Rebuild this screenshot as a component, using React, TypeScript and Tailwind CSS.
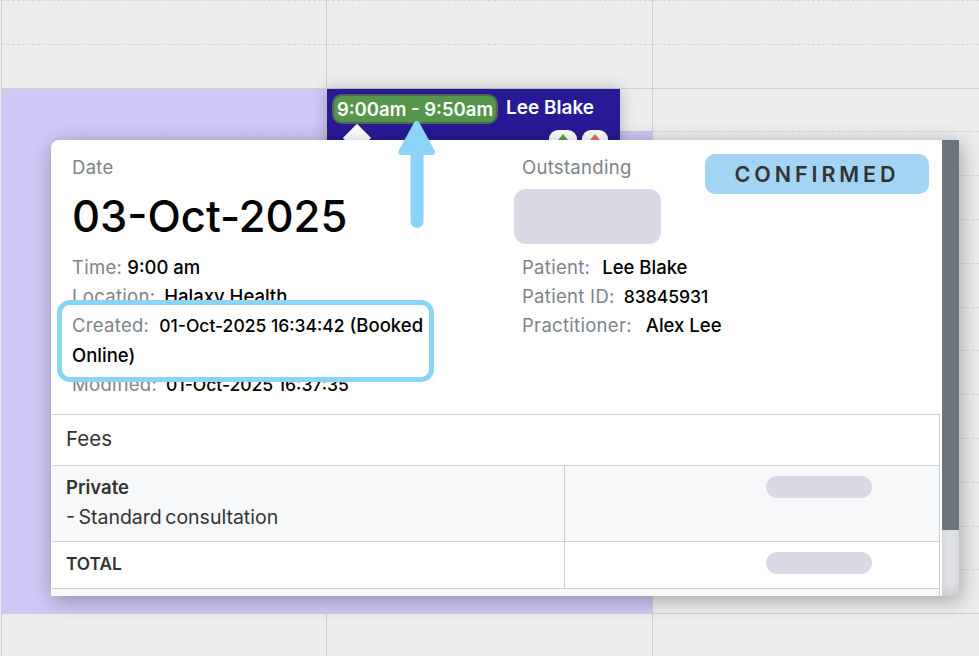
const FONT = "font-['Inter','Liberation_Sans',sans-serif]";

function Slot({ purple, solid, grow }: { purple?: boolean; solid?: boolean; grow?: boolean }) {
  const line = solid ? 'border-solid border-[#cfd0d6]' : purple ? 'border-dashed border-[#cbc3ec]' : 'border-dashed border-[#d6d6de]';
  return (
    <div className={`${grow ? 'flex-1' : 'h-[43.8px] shrink-0'} border-t ${line} ${purple ? 'bg-[#d1c7f6]' : 'bg-[#ededed]'}`} />
  );
}

// col 1 goes purple from the 3rd slot, col 2 from the 4th, col 3 stays grey
function Column({ purpleFrom, width }: { purpleFrom: number; width: string }) {
  const slots = Array.from({ length: 14 }, (_, i) => i);
  return (
    <div className={`${width} flex flex-col border-l border-[#cfd0d6]`}>
      {slots.map(i => (
        <Slot key={i} solid={i === 2} purple={i >= purpleFrom} />
      ))}
      <Slot solid grow />
    </div>
  );
}

function Label({ children }: { children: string }) {
  return <span className="text-[#7d828b] tracking-[0.3px]">{children}</span>;
}

function Row({ label, value, gap, small }: { label: string; value: string; gap: string; small?: boolean }) {
  return (
    <p className="h-[29px] leading-[29px] whitespace-nowrap">
      <Label>{label}</Label>
      <span className={`${gap} font-medium text-black ${small ? 'text-[17.5px]' : ''}`}>{value}</span>
    </p>
  );
}

function Pill() {
  return <div className="w-[106px] h-[22px] rounded-full bg-[#d9d9e5]" />;
}

export default function App() {
  return (
    <div className={`relative w-[979px] h-[656px] overflow-hidden bg-[#ededed] ${FONT}`}>
      <div className="flex h-full">
        <div className="w-px" />
        <Column purpleFrom={2} width="w-[325px]" />
        <Column purpleFrom={3} width="w-[326px]" />
        <Column purpleFrom={99} width="flex-1" />
      </div>

      {/* appointment tile, mostly hidden by the popup */}
      <div className="absolute left-[327px] top-[89px] w-[293px] h-[60px] bg-[#271a94] shadow-[0_0_14px_rgba(0,0,0,0.25)] px-[5px] pt-[5px]">
        <div className="flex items-center gap-[8px] h-[30px]">
          <span className="h-[30px] w-[166px] rounded-[10px] border-2 border-[#4b6a55] bg-[#55964a] text-center text-[18.5px] leading-[26px] font-semibold text-white whitespace-nowrap">
            9:00am - 9:50am
          </span>
          <span className="mb-[2px] text-[19px] font-semibold text-white whitespace-nowrap">Lee Blake</span>
        </div>
        <div className="flex justify-end gap-[5px] mt-[6px] mr-[7px]">
          <div className="w-[28px] h-[24px] rounded-t-[9px] bg-white flex justify-center pt-[4px]">
            <svg width="14" height="12" viewBox="0 0 14 12"><path d="M7 0 L12 6 H9 V12 H5 V6 H2 Z" fill="#55a04a" /></svg>
          </div>
          <div className="w-[26px] h-[24px] rounded-t-[9px] bg-white flex justify-center pt-[4px]">
            <svg width="14" height="12" viewBox="0 0 14 12"><path d="M7 0 L12 6 H9 V12 H5 V6 H2 Z" fill="#e07070" /></svg>
          </div>
        </div>
      </div>

      {/* popup pointer */}
      <div className="absolute left-[347px] top-[128px] w-[20px] h-[20px] rotate-45 bg-white" />

      {/* popup */}
      <div className="absolute left-[51px] top-[140px] w-[908px] h-[456px] flex overflow-hidden rounded-tl-[8px] bg-white text-[18.5px] shadow-[2px_4px_20px_rgba(0,0,0,0.32)]">
        <div className="w-[891px] shrink-0">
          <div className="flex pt-[15px]">
            <div className="w-[471px] shrink-0 pl-[21px] pr-[84px]">
              <p className="h-[24px] leading-[24px]"><Label>Date</Label></p>
              <p className="h-[56px] mt-[9px] text-[43.5px] leading-[56px] font-medium text-black whitespace-nowrap">03-Oct-2025</p>
              <div className="mt-[9px]">
                <Row label="Time:" value="9:00 am" gap="ml-[5px]" />
                <Row label="Location:" value="Halaxy Health" gap="ml-[9px]" />
                <div className="relative">
                  <div className="absolute -left-[15px] -top-[11px] w-[377px] h-[82px] rounded-[13px] border-[5px] border-[#8ad4f8] bg-white" />
                  <p className="relative h-[59px] leading-[29.5px]">
                    <Label>Created:</Label>
                    <span className="ml-[10px] font-medium text-black">
                      <span className="text-[17.5px]">01-Oct-2025 16:34:42</span> (Booked Online)
                    </span>
                  </p>
                </div>
                <Row label="Modified:" value="01-Oct-2025 16:37:35" gap="ml-[9px]" small />
              </div>
            </div>
            <div className="w-[183px] shrink-0">
              <p className="h-[24px] leading-[24px]"><Label>Outstanding</Label></p>
              <div className="-ml-[8px] mt-[10px] w-[147px] h-[55px] rounded-[12px] bg-[#d9d9e5]" />
              <div className="mt-[9px]">
                <Row label="Patient:" value="Lee Blake" gap="ml-[12px]" />
                <Row label="Patient ID:" value="83845931" gap="ml-[9px]" small />
                <Row label="Practitioner:" value="Alex Lee" gap="ml-[14px]" />
              </div>
            </div>
            <div className="w-[224px] h-[40px] -mt-[1px] rounded-[10px] bg-[#a4d4f4] text-center text-[21.5px] leading-[40px] font-semibold tracking-[3.9px] text-[#333]">
              CONFIRMED
            </div>
          </div>

          <div className="ml-px mr-[2px] mt-[14.5px] border-r border-t border-[#cfd0d6] text-[#333]">
            <div className="h-[51px] pl-[14px] text-[20.5px] leading-[48px] border-b border-[#cfd0d6]">Fees</div>
            <div className="flex h-[76px] bg-[#f7f8fa] border-b border-[#cfd0d6]">
              <div className="w-[513px] pl-[14px] pt-[6px] border-r border-[#cfd0d6]">
                <p className="h-[30px] leading-[30px] font-semibold">Private</p>
                <p className="h-[30px] leading-[30px] text-[19.5px] [word-spacing:-2px]">- Standard consultation</p>
              </div>
              <div className="flex-1 pl-[201px] pt-[10px]"><Pill /></div>
            </div>
            <div className="flex h-[47px] border-b border-[#cfd0d6]">
              <div className="w-[513px] pl-[14px] text-[17.25px] leading-[43px] font-semibold border-r border-[#cfd0d6]">TOTAL</div>
              <div className="flex-1 pl-[201px] pt-[10px]"><Pill /></div>
            </div>
            <div className="h-[10px] bg-[#f7f8fa]" />
          </div>
        </div>

        {/* scrollbar */}
        <div className="flex-1 flex flex-col bg-[#e1e2e6] shadow-[inset_0_-5px_8px_rgba(0,0,0,0.1)]">
          <div className="h-[390px] bg-[#6c757d]" />
        </div>
      </div>

      {/* annotation arrow */}
      <svg className="absolute left-[396px] top-[119px]" width="41" height="111" viewBox="0 0 41 111">
        <path d="M20.7 5 L36 33 H5.4 Z" fill="#8ad4f8" stroke="#8ad4f8" strokeWidth="6" strokeLinejoin="round" />
        <path d="M21 33 V102.5" stroke="#8ad4f8" strokeWidth="13" strokeLinecap="round" />
      </svg>
    </div>
  );
}
